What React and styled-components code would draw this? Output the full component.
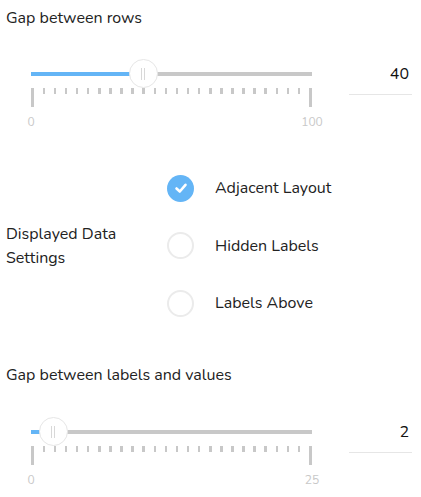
import React, {useState} from 'react'
import styled, {createGlobalStyle} from 'styled-components'

const GlobalStyle = createGlobalStyle`
  body {
    margin: 0;
    background: #fff;
    font-family: Nunito, Lato, "Open Sans", sans-serif;
    color: #222;
  }
`;

const Page = styled.div`
  width: 421px;
  padding: 8px 6px 0;
  box-sizing: border-box;
`;

const Title = styled.div`
  font-size: 16px;
  line-height: 20px;
  margin-top: ${(p) => p.top || 0}px;
`;

const SliderRow = styled.div`
  display: flex;
  align-items: flex-start;
  margin-top: ${(p) => p.top}px;
  padding-left: 25px;
`;

const SliderBox = styled.div`
  width: 281px;
`;

const Rail = styled.div`
  position: relative;
  height: 29px;
`;

const Track = styled.div`
  position: absolute;
  left: 0;
  right: 0;
  top: 13px;
  height: 4px;
  background: #c8c8c8;
`;

const Fill = styled.div`
  position: absolute;
  left: 0;
  top: 13px;
  height: 4px;
  background: #64b5f6;
`;

const Thumb = styled.div`
  position: absolute;
  top: 0;
  width: 29px;
  height: 29px;
  margin-left: -14.5px;
  box-sizing: border-box;
  border-radius: 50%;
  background: #fff;
  border: 1px solid #e6e6e6;
  display: flex;
  align-items: center;
  justify-content: center;
  gap: 2px;

  span {
    width: 1px;
    height: 12px;
    background: #d8d8d8;
  }
`;

const Ticks = styled.div`
  display: flex;
  justify-content: space-between;
  align-items: flex-start;
  height: 19px;
`;

const Tick = styled.div`
  width: ${(p) => (p.major ? 3 : 2.5)}px;
  height: ${(p) => (p.major ? 19 : 6)}px;
  background: #c8c8c8;
`;

const Labels = styled.div`
  display: flex;
  justify-content: space-between;
  margin-top: 8px;
  font-size: 12px;
  line-height: 14px;
  color: #c8c8c8;

  span {
    width: 0;
    display: flex;
    justify-content: center;
    white-space: nowrap;
  }
`;

const ValueBox = styled.div`
  width: 63px;
  height: 36px;
  margin-left: 37px;
  box-sizing: border-box;
  padding: 0 3px 6px 0;
  border-bottom: 1px solid #e6e6e6;
  display: flex;
  align-items: center;
  justify-content: flex-end;
  font-size: 16px;
  color: #111;
`;

const Settings = styled.div`
  display: flex;
  align-items: center;
  margin-top: 45px;
`;

const SettingsLabel = styled.div`
  width: 161px;
  font-size: 16px;
  line-height: 24px;
`;

const Options = styled.div`
  display: flex;
  flex-direction: column;
  gap: 29.5px;
`;

const Option = styled.label`
  display: flex;
  align-items: center;
  height: 28px;
  gap: 21px;
  font-size: 16px;
  cursor: pointer;
`;

const Circle = styled.div`
  width: 27px;
  height: 27px;
  box-sizing: border-box;
  border-radius: 50%;
  background: ${(p) => (p.checked ? '#64b5f6' : '#fff')};
  border: ${(p) => (p.checked ? 'none' : '2px solid #ebebeb')};
  display: flex;
  align-items: center;
  justify-content: center;
`;

const Slider = ({value, max, top}) => {
  const pct = (value / max) * 100
  const ticks = Array.from({length: 26}, (_, i) => i)
  return (
    <SliderRow top={top}>
      <SliderBox>
        <Rail>
          <Track />
          <Fill style={{width: pct + '%'}} />
          <Thumb style={{left: pct + '%'}}>
            <span />
            <span />
          </Thumb>
        </Rail>
        <Ticks>
          {ticks.map((i) => (
            <Tick key={i} major={i === 0 || i === 25} />
          ))}
        </Ticks>
        <Labels>
          <span>0</span>
          <span>{max}</span>
        </Labels>
      </SliderBox>
      <ValueBox>{value}</ValueBox>
    </SliderRow>
  )
}

const options = ['Adjacent Layout', 'Hidden Labels', 'Labels Above']

export default function App() {
  const [selected, setSelected] = useState(0)
  return (
    <Page>
      <GlobalStyle />
      <Title>Gap between rows</Title>
      <Slider value={40} max={100} top={31} />

      <Settings>
        <SettingsLabel>
          Displayed Data
          <br />
          Settings
        </SettingsLabel>
        <Options>
          {options.map((o, i) => (
            <Option key={o} onClick={() => setSelected(i)}>
              <Circle checked={selected === i}>
                {selected === i && (
                  <svg width="14" height="14" viewBox="0 0 14 14">
                    <polyline
                      points="2.5,7.5 5.8,10.5 11.5,3.8"
                      fill="none"
                      stroke="#fff"
                      strokeWidth="2.6"
                      strokeLinecap="round"
                      strokeLinejoin="round"
                    />
                  </svg>
                )}
              </Circle>
              {o}
            </Option>
          ))}
        </Options>
      </Settings>

      <Title top={48}>Gap between labels and values</Title>
      <Slider value={2} max={25} top={32} />
    </Page>
  )
}
